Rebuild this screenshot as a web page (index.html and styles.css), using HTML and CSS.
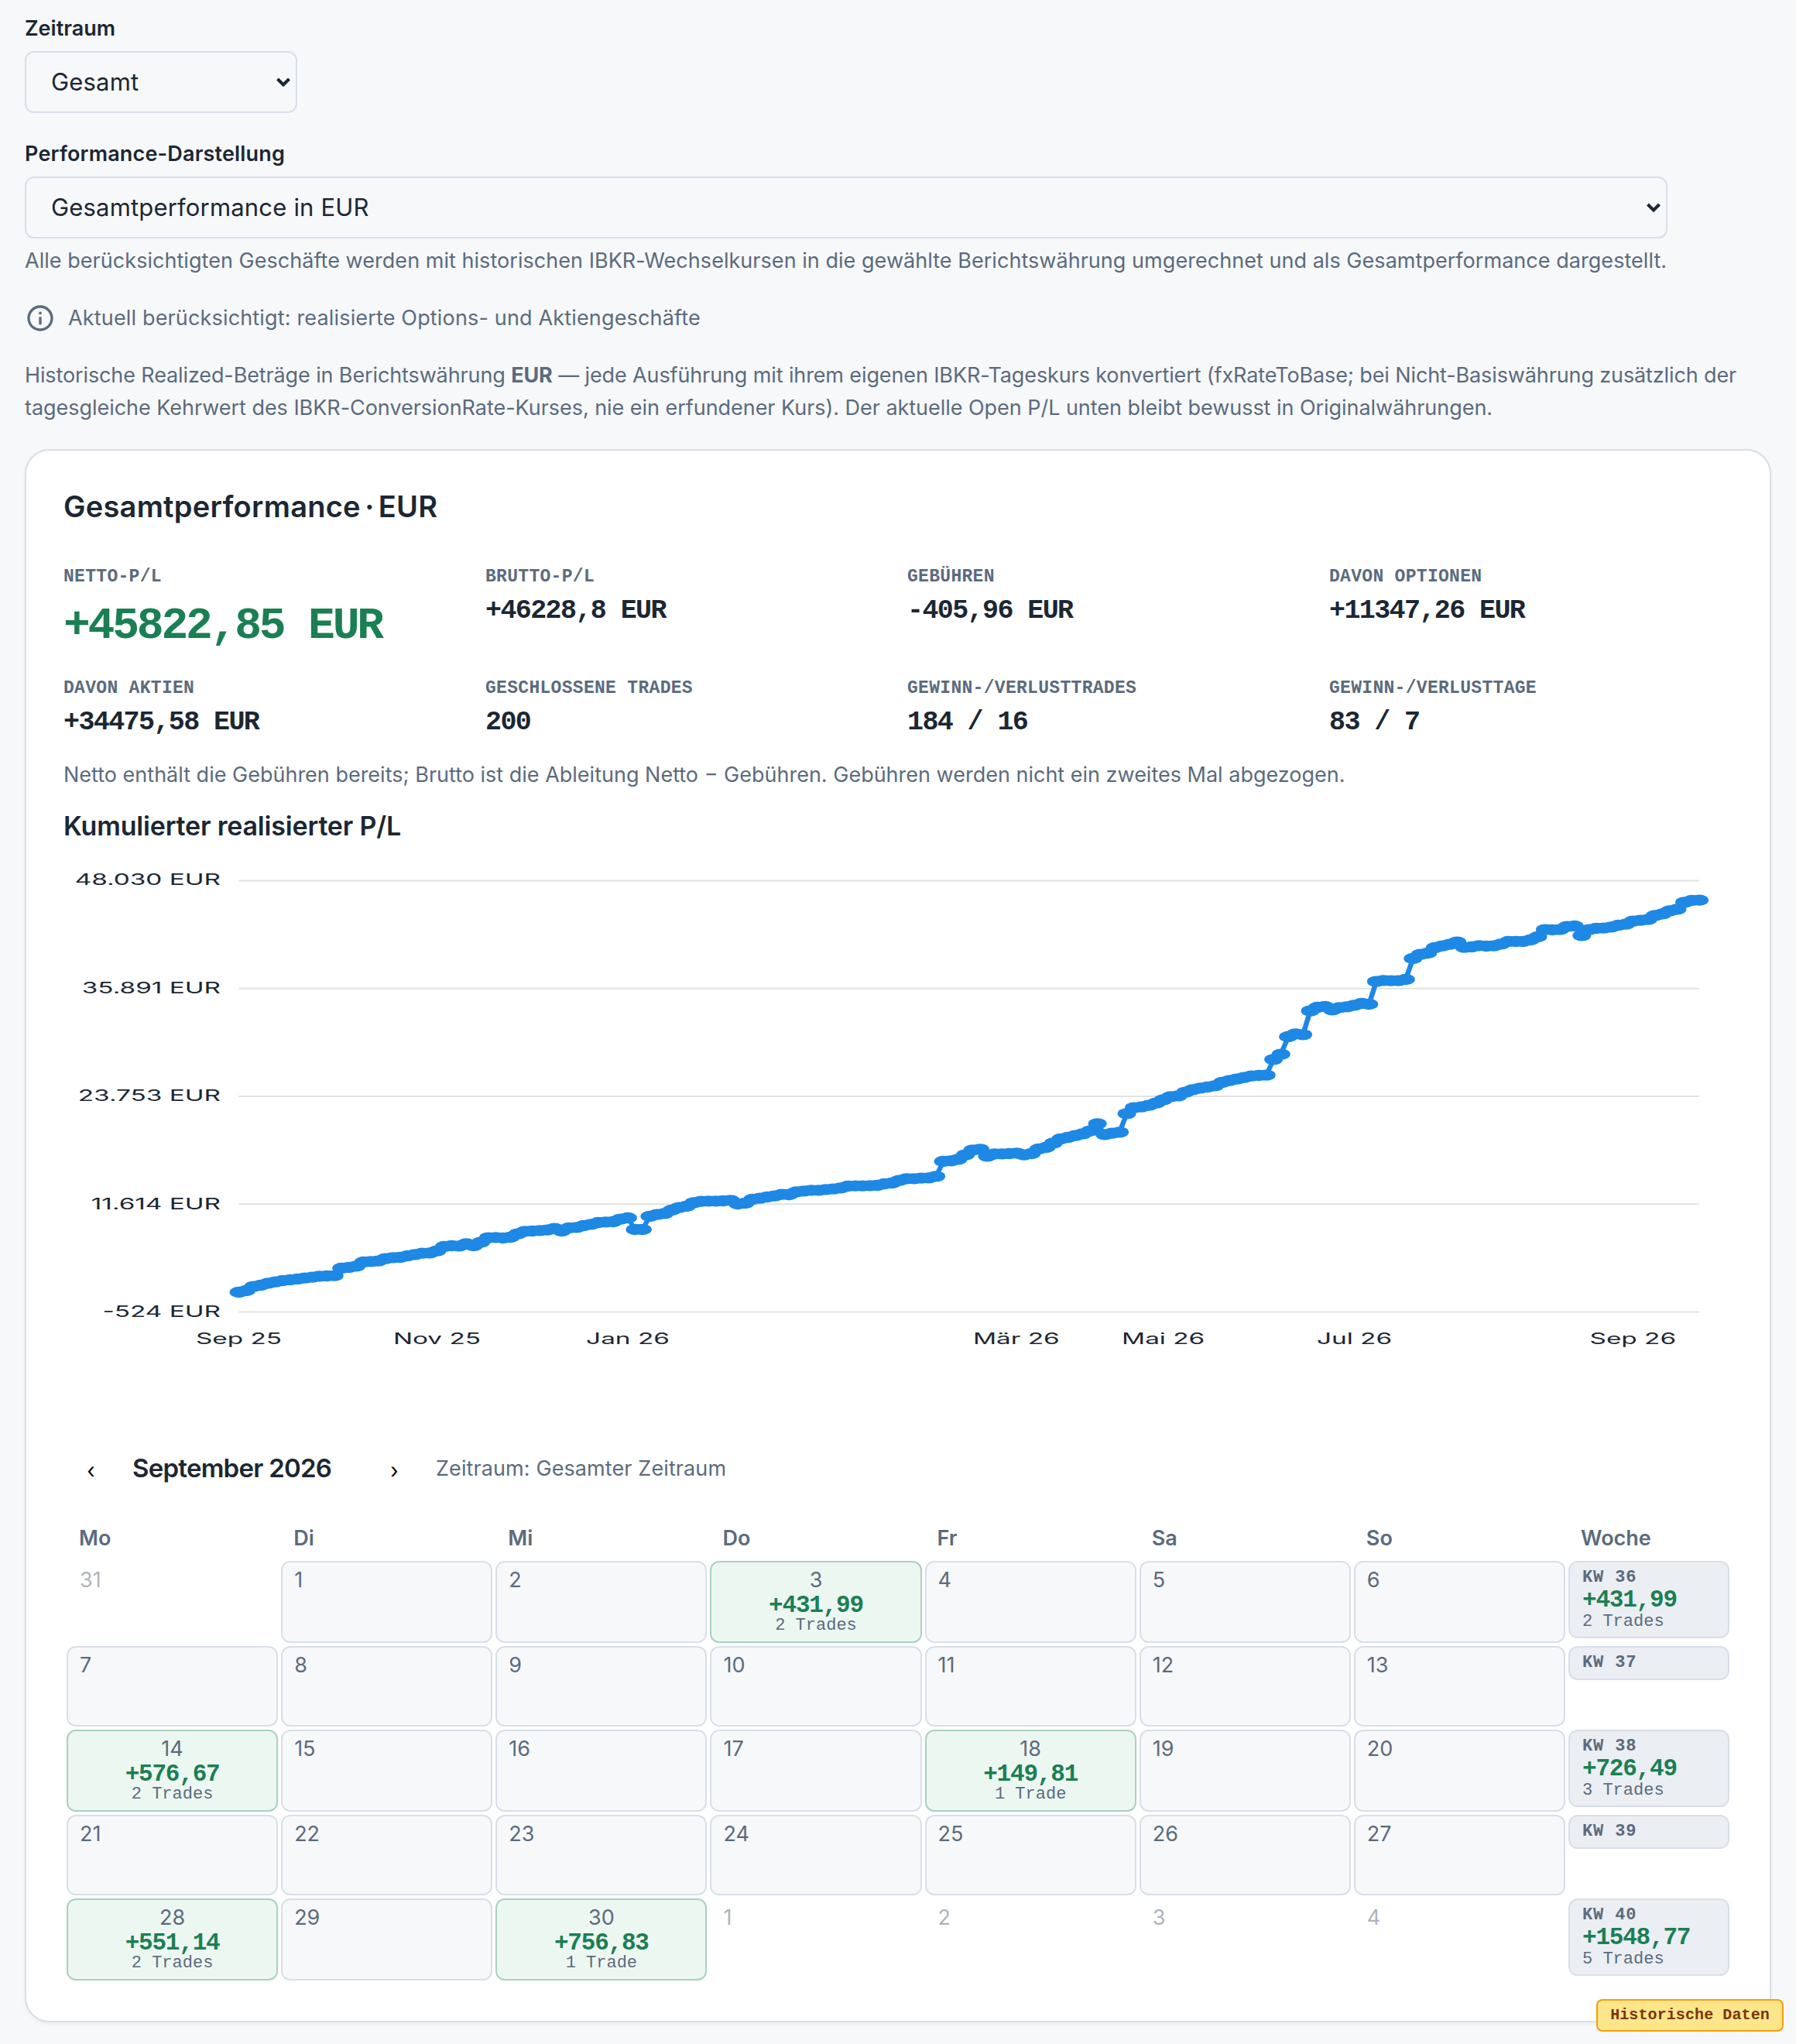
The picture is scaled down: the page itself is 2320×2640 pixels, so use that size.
FILE: index.html
```html
<!DOCTYPE html>
<html lang="de">
<head>
  <meta charset="UTF-8">
  <title>Performance</title>
  <meta name="viewport" content="width=device-width, initial-scale=1.0">
  <link rel="stylesheet" href="styles.css">
</head>
<body>

  <div class="field">
    <div class="label">Zeitraum</div>
    <div class="select select-small">
      <span>Gesamt</span>
      <svg class="chevron" viewBox="0 0 18 12"><path d="M1.5 2l7.5 7.5L16.5 2"/></svg>
    </div>
  </div>

  <div class="field field-view">
    <div class="label label-view">Performance-Darstellung</div>
    <div class="select select-wide">
      <span>Gesamtperformance in EUR</span>
      <svg class="chevron" viewBox="0 0 18 12"><path d="M1.5 2l7.5 7.5L16.5 2"/></svg>
    </div>
    <div class="help">Alle berücksichtigten Geschäfte werden mit historischen IBKR-Wechselkursen in die gewählte Berichtswährung umgerechnet und als Gesamtperformance dargestellt.</div>
  </div>

  <div class="info">
    <svg class="info-icon" viewBox="0 0 24 24"><path d="M11 7h2v2h-2zm0 4h2v6h-2zm1-9C6.48 2 2 6.48 2 12s4.48 10 10 10 10-4.48 10-10S17.52 2 12 2zm0 18c-4.41 0-8-3.59-8-8s3.59-8 8-8 8 3.59 8 8-3.59 8-8 8z"/></svg>
    <span>Aktuell berücksichtigt: realisierte Options- und Aktiengeschäfte</span>
  </div>

  <p class="intro"><span class="intro-lead">Historische Realized-Beträge in Berichtswährung <strong>EUR</strong> — jede Ausführung mit ihrem eigenen IBKR-Tageskurs konvertiert (fxRateToBase; bei Nicht-Basiswährung zusätzlich der</span><br>tagesgleiche Kehrwert des IBKR-ConversionRate-Kurses, nie ein erfundener Kurs). Der aktuelle Open P/L unten bleibt bewusst in Originalwährungen.</p>

  <div class="card">
    <h2>Gesamtperformance · EUR</h2>

    <div class="kpis">
      <div><div class="kpi-label">Netto-P/L</div><div class="kpi-value kpi-main">+45822,85 EUR</div></div>
      <div><div class="kpi-label">Brutto-P/L</div><div class="kpi-value">+46228,8 EUR</div></div>
      <div><div class="kpi-label">Gebühren</div><div class="kpi-value">-405,96 EUR</div></div>
      <div><div class="kpi-label">davon Optionen</div><div class="kpi-value">+11347,26 EUR</div></div>
      <div><div class="kpi-label">davon Aktien</div><div class="kpi-value">+34475,58 EUR</div></div>
      <div><div class="kpi-label">Geschlossene Trades</div><div class="kpi-value">200</div></div>
      <div><div class="kpi-label">Gewinn-/Verlusttrades</div><div class="kpi-value">184 / 16</div></div>
      <div><div class="kpi-label">Gewinn-/Verlusttage</div><div class="kpi-value">83 / 7</div></div>
    </div>

    <p class="note">Netto enthält die Gebühren bereits; Brutto ist die Ableitung Netto − Gebühren. Gebühren werden nicht ein zweites Mal abgezogen.</p>

    <h3>Kumulierter realisierter P/L</h3>

    <svg class="chart" id="chart" viewBox="0 0 1293.6 640" preserveAspectRatio="none">
      <g class="grid">
        <path d="M135.9 17.5H1267.8M135.9 156.7H1267.8M135.9 296H1267.8M135.9 435.2H1267.8M135.9 574.4H1267.8"/>
      </g>
      <g class="axis axis-y">
        <text x="121.8" y="23.5">48.030 EUR</text>
        <text x="121.8" y="163">35.891 EUR</text>
        <text x="121.8" y="302">23.753 EUR</text>
        <text x="121.8" y="442">11.614 EUR</text>
        <text x="121.8" y="581">-524 EUR</text>
      </g>
      <g class="axis axis-x">
        <text x="135.9" y="616">Sep 25</text>
        <text x="289.5" y="616">Nov 25</text>
        <text x="437.4" y="616">Jan 26</text>
        <text x="738.5" y="616">Mär 26</text>
        <text x="852.4" y="616">Mai 26</text>
        <text x="1000.5" y="616">Jul 26</text>
        <text x="1216.4" y="616">Sep 26</text>
      </g>
    </svg>

    <div class="month-nav">
      <button class="nav-btn">‹</button>
      <div class="month">September 2026</div>
      <button class="nav-btn">›</button>
      <div class="range">Zeitraum: Gesamter Zeitraum</div>
    </div>

    <div class="calendar weekdays">
      <div>Mo</div><div>Di</div><div>Mi</div><div>Do</div><div>Fr</div><div>Sa</div><div>So</div><div>Woche</div>
    </div>

    <div class="calendar days">
      <div class="day out">31</div>
      <div class="day">1</div>
      <div class="day">2</div>
      <div class="day win">3<b>+431,99</b><small>2 Trades</small></div>
      <div class="day">4</div>
      <div class="day">5</div>
      <div class="day">6</div>
      <div class="week"><span>KW 36</span><b>+431,99</b><small>2 Trades</small></div>

      <div class="day">7</div>
      <div class="day">8</div>
      <div class="day">9</div>
      <div class="day">10</div>
      <div class="day">11</div>
      <div class="day">12</div>
      <div class="day">13</div>
      <div class="week"><span>KW 37</span></div>

      <div class="day win">14<b>+576,67</b><small>2 Trades</small></div>
      <div class="day">15</div>
      <div class="day">16</div>
      <div class="day">17</div>
      <div class="day win">18<b>+149,81</b><small>1 Trade</small></div>
      <div class="day">19</div>
      <div class="day">20</div>
      <div class="week"><span>KW 38</span><b>+726,49</b><small>3 Trades</small></div>

      <div class="day">21</div>
      <div class="day">22</div>
      <div class="day">23</div>
      <div class="day">24</div>
      <div class="day">25</div>
      <div class="day">26</div>
      <div class="day">27</div>
      <div class="week"><span>KW 39</span></div>

      <div class="day win">28<b>+551,14</b><small>2 Trades</small></div>
      <div class="day">29</div>
      <div class="day win">30<b>+756,83</b><small>1 Trade</small></div>
      <div class="day out">1</div>
      <div class="day out">2</div>
      <div class="day out">3</div>
      <div class="day out">4</div>
      <div class="week"><span>KW 40</span><b>+1548,77</b><small>5 Trades</small></div>
    </div>
  </div>

  <div class="badge">Historische Daten</div>

  <script src="script.js"></script>
</body>
</html>
```
FILE: styles.css
```css
* { box-sizing: border-box; }

body {
  margin: 0;
  padding: 16px 32px 28px;
  background: #f7f8fa;
  color: #1c2733;
  font-family: Inter, "Liberation Sans", sans-serif;
  font-size: 27px;
  line-height: 42px;
}

h2, h3, p { margin: 0; }

.label {
  height: 50px;
  line-height: 42px;
  font-weight: 600;
}

.label-view { letter-spacing: 0.17px; }

.field-view { margin-top: 32px; }

.select {
  display: flex;
  align-items: center;
  justify-content: space-between;
  height: 80px;
  padding: 0 7px 0 32px;
  border: 2px solid #d8dfe9;
  border-radius: 12px;
  font-size: 31px;
  letter-spacing: 0.18px;
}

.select-small { width: 352px; }
.select-wide { width: 2122px; }

.chevron {
  width: 18px;
  height: 12px;
  fill: none;
  stroke: #1c2733;
  stroke-width: 4;
}

.help {
  margin-top: 8px;
  color: #5b6b7d;
  letter-spacing: 0.04px;
  white-space: nowrap;
}

.info {
  display: flex;
  align-items: center;
  gap: 16px;
  margin-top: 32px;
  color: #5b6b7d;
  letter-spacing: 0.16px;
}

.info-icon {
  width: 40px;
  height: 40px;
  fill: #5b6b7d;
}

.intro {
  margin-top: 32px;
  color: #5b6b7d;
  letter-spacing: -0.04px;
  white-space: nowrap;
}

.intro-lead { letter-spacing: -0.12px; }

.card {
  margin-top: 32px;
  padding: 48px 48px 52px;
  background: #fff;
  border: 2px solid #d8dfe9;
  border-radius: 32px;
  box-shadow: 0 2px 4px rgba(28, 39, 51, 0.06);
}

h2 {
  font-size: 38px;
  line-height: 48px;
  font-weight: 600;
  letter-spacing: 0.25px;
  word-spacing: -4.5px;
}

h3 {
  margin-top: 23px;
  font-size: 34px;
  line-height: 44px;
  font-weight: 600;
  letter-spacing: -0.18px;
}

/* Kennzahlen */
.kpis {
  display: grid;
  grid-template-columns: repeat(4, 1fr);
  gap: 24px;
  margin-top: 53px;
  font-family: "Liberation Mono", monospace;
  font-weight: bold;
}

.kpi-label {
  height: 36px;
  font-size: 23px;
  line-height: 28px;
  letter-spacing: 0.3px;
  text-transform: uppercase;
  color: #5b6b7d;
}

.kpi-value {
  font-size: 35px;
  line-height: 44px;
  letter-spacing: -1.6px;
}

.kpi-main {
  font-size: 58px;
  line-height: 84px;
  letter-spacing: -3.2px;
  color: #1b7f54;
}

.note {
  margin-top: 25px;
  color: #5b6b7d;
}

/* Chart */
.chart {
  display: block;
  width: 100%;
  height: 640px;
  margin-top: 31px;
}

.grid path {
  stroke: #e0e2e3;
  stroke-width: 2;
  fill: none;
}

.axis {
  font-size: 20px;
  fill: #1c2733;
}

.axis-y { text-anchor: end; }
.axis-x { text-anchor: middle; }

.line {
  fill: none;
  stroke: #1e88e5;
  stroke-width: 4;
}

.dot { fill: #1e88e5; }

/* Kalender */
.month-nav {
  display: flex;
  align-items: center;
  gap: 18px;
  height: 44px;
  margin-top: 114px;
}

.nav-btn {
  width: 71px;
  padding: 6px 0 0;
  border: none;
  background: none;
  color: #000;
  font: 27px Inter, sans-serif;
}

.month {
  width: 285px;
  font-size: 33px;
  font-weight: 600;
  letter-spacing: -0.75px;
}

.range {
  padding-top: 1px;
  color: #5b6b7d;
  letter-spacing: 0.1px;
}

.calendar {
  display: grid;
  grid-template-columns: repeat(7, 1fr) 208px;
  column-gap: 4px;
  margin: 0 4px;
  color: #5b6b7d;
}

.weekdays {
  margin-top: 48px;
  padding-bottom: 8px;
  font-weight: 600;
}

.weekdays div { padding-left: 16px; }

.days {
  grid-template-rows: 106px 104px 106px 104px 106px;
  row-gap: 4px;
  align-items: start;
}

.day {
  height: 100%;
  padding: 6px 15px;
  background: #f7f8fa;
  border: 2px solid #d8dfe9;
  border-radius: 12px;
  line-height: 34px;
}

.day.out {
  background: none;
  border-color: transparent;
  opacity: 0.5;
}

.day.win {
  background: #edf7f2;
  border-color: #a9d1c0;
  text-align: center;
}

.day b, .day small, .week {
  font-family: "Liberation Mono", monospace;
}

.day b, .week b {
  display: block;
  font-size: 31px;
  letter-spacing: -1.2px;
  color: #1b7f54;
}

.day small, .week small {
  display: block;
  font-size: 22px;
}

.day b { line-height: 31px; }
.day small { line-height: 21px; }

.week {
  padding: 7px 16px;
  background: #ebeef3;
  border: 2px solid #d8dfe9;
  border-radius: 12px;
}

.week span {
  display: block;
  font-size: 22px;
  line-height: 26px;
  font-weight: bold;
  letter-spacing: 0.04em;
}

.week b { line-height: 32px; }
.week small { line-height: 24px; }

.badge {
  position: fixed;
  right: 16px;
  bottom: 16px;
  width: 242px;
  height: 42px;
  background: #fde68a;
  border: 2px solid #f59e0b;
  border-radius: 8px;
  color: #78350f;
  font: bold 20px/38px "Liberation Mono", monospace;
  letter-spacing: 0.1px;
  text-align: center;
}
```
FILE: script.js
```js
// kumulierter P/L je Trade, als y-Position in Drittelpixeln
var points = [
  1647, 1641, 1625, 1620, 1612, 1607, 1602, 1599, 1596, 1592, 1589, 1585, 1584, 1583, 1554, 1551, 1546, 1530, 1528, 1526,
  1517, 1513, 1512, 1506, 1501, 1496, 1495, 1487, 1470, 1467, 1468, 1459, 1467, 1453, 1436, 1435, 1437, 1434, 1421, 1411,
  1410, 1408, 1406, 1400, 1410, 1398, 1396, 1389, 1384, 1377, 1375, 1374, 1364, 1359, 1404, 1404, 1353, 1346, 1342, 1329,
  1319, 1314, 1300, 1295, 1294, 1294, 1293, 1291, 1305, 1302, 1287, 1283, 1278, 1274, 1268, 1269, 1258, 1255, 1252, 1252,
  1249, 1247, 1243, 1236, 1235, 1235, 1234, 1233, 1227, 1224, 1214, 1207, 1207, 1205, 1204, 1198, 1140, 1138, 1132, 1115,
  1096, 1093, 1120, 1111, 1111, 1110, 1108, 1115, 1110, 1092, 1086, 1069, 1053, 1047, 1040, 1033, 1022, 994, 1036, 1031,
  1027, 955, 932, 929, 923, 914, 901, 889, 886, 872, 862, 856, 852, 847, 834, 827, 821, 815, 809, 807,
  806, 745, 725, 657, 646, 649, 557, 543, 540, 553, 544, 541, 535, 528, 531, 443, 439, 440, 440, 435,
  354, 338, 333, 312, 305, 299, 290, 311, 309, 304, 306, 305, 298, 288, 288, 288, 282, 270, 242, 243,
  242, 230, 228, 265, 242, 237, 236, 232, 225, 221, 209, 206, 203, 187, 181, 169, 163, 136, 129, 128
];

var chart = document.getElementById("chart");
var ns = "http://www.w3.org/2000/svg";
var left = 135.9, right = 1267.8;
var coords = points.map(function (p, i) {
  return [left + i * (right - left) / (points.length - 1), p / 3];
});

var line = document.createElementNS(ns, "polyline");
line.setAttribute("class", "line");
line.setAttribute("points", coords.join(" "));
chart.appendChild(line);

coords.forEach(function (c) {
  var dot = document.createElementNS(ns, "circle");
  dot.setAttribute("class", "dot");
  dot.setAttribute("cx", c[0]);
  dot.setAttribute("cy", c[1]);
  dot.setAttribute("r", 7.2);
  chart.appendChild(dot);
});
```
